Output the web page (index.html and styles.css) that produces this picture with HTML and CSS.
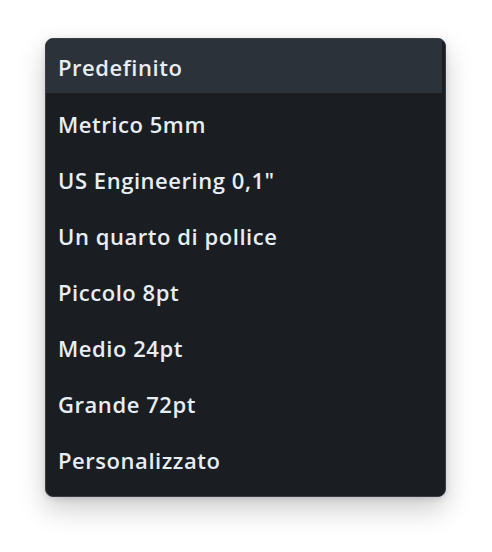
FILE: index.html
```html
<!DOCTYPE html>
<html lang="it">
<head>
<meta charset="utf-8">
<link rel="stylesheet" href="styles.css">
</head>
<body>
<div class="menu">
  <div class="item active">Predefinito</div>
  <div class="item">Metrico 5mm</div>
  <div class="item">US Engineering 0,1"</div>
  <div class="item">Un quarto di pollice</div>
  <div class="item">Piccolo 8pt</div>
  <div class="item">Medio 24pt</div>
  <div class="item">Grande 72pt</div>
  <div class="item">Personalizzato</div>
</div>
</body>
</html>
```
FILE: styles.css
```css
html, body {
  margin: 0;
  padding: 0;
  background: #ffffff;
}
body {
  width: 492px;
  height: 552px;
  overflow: hidden;
  font-family: "Open Sans", "Noto Sans", sans-serif;
}
.menu {
  margin: 38px 0 0 45px;
  width: 399px;
  height: 457px;
  box-sizing: content-box;
  background: #1a1d21;
  border: 1px solid #3a3e44;
  border-radius: 8px;
  box-shadow: 0 12px 28px rgba(0, 0, 0, 0.2), 0 2px 6px rgba(0, 0, 0, 0.12);
  overflow: hidden;
  display: flex;
  flex-direction: column;
}
.item {
  height: 56px;
  flex: 0 0 56px;
  display: flex;
  align-items: center;
  padding: 2px 0 0 12px;
  box-sizing: border-box;
  margin-right: 3px;
  color: #e6edf5;
  font-size: 22px;
  font-weight: 600;
  letter-spacing: 0.55px;
}
.item.active {
  background: #2c323a;
  height: 54px;
  flex-basis: 54px;
  margin-bottom: 2px;
}
```
